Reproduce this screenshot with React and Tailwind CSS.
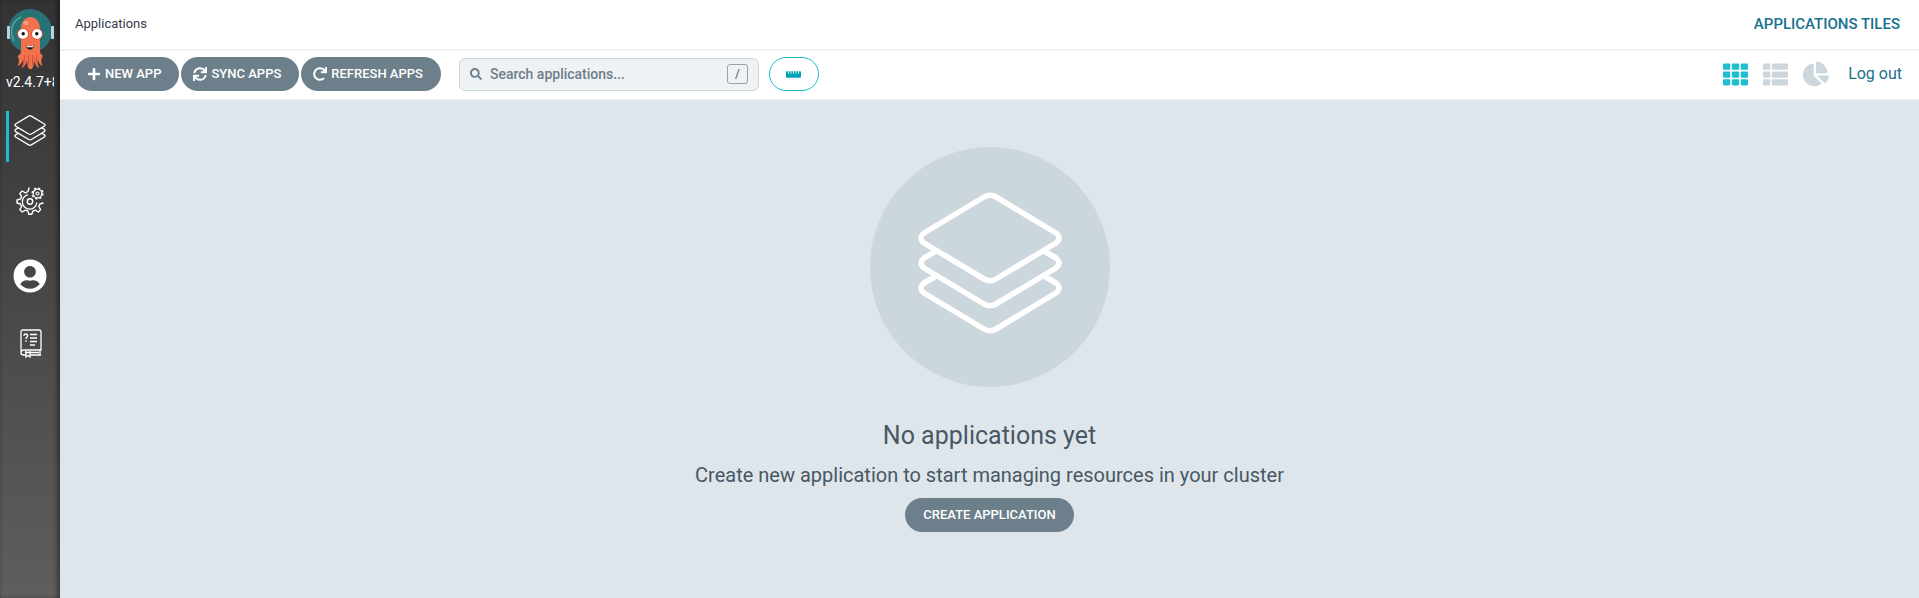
import { FaPlus, FaSync, FaRedo, FaSearch, FaRulerHorizontal, FaTh, FaThList, FaChartPie, FaUserCircle } from 'react-icons/fa';

function Octopus() {
  return (
    <svg viewBox="0 0 48 62" className="h-[62px] w-[48px]" aria-hidden="true">
      <circle cx="24" cy="23" r="21.5" fill="#257373" stroke="#356a86" strokeWidth="1" />
      <path d="M8 33C3 24 6 13 15 9" fill="none" stroke="#6fa5a5" strokeWidth="1.2" strokeLinecap="round" />
      <rect x="1" y="18" width="3" height="13" rx="0.8" fill="#b4cfe6" />
      <rect x="45" y="18" width="3" height="13" rx="0.8" fill="#b4cfe6" />
      <path d="M15 21C15 5 34 5 34 21C36 24 35 29 34 31V43C34 46 36 47 37 48C35 50 35 54 36.500 58C33.500 57 32 53 31.500 51C31.500 54 32 57 33 60C30 59 28.500 55 28 52C28 56 27.500 59 26 61H23C21.500 59 21 56 21 52C20.500 55 19 59 15.500 60C17 57 17.500 54 17.500 51C17 53 15 57 11.500 58C13.500 54 13.500 51 11.500 48C13 47 15 46 15 43V31C14 29 13 24 15 21Z" fill="#f0714c" />
      <path d="M18.500 47C18.500 52 18 55 17 58M22.500 47V57M26.500 47V57M30.500 47C30.500 52 31 55 32 58" fill="none" stroke="#c24e34" strokeWidth="0.8" />
      <ellipse cx="20" cy="15" rx="2.6" ry="2.2" fill="#f79d82" />
      <circle cx="17" cy="26" r="5.800" fill="#e04e35" />
      <circle cx="31" cy="26" r="5.800" fill="#e04e35" />
      <circle cx="17" cy="26" r="5" fill="#fff" />
      <circle cx="31" cy="26" r="5" fill="#fff" />
      <circle cx="17.200" cy="25.700" r="1.700" fill="#111" />
      <circle cx="30.800" cy="25.700" r="1.700" fill="#111" />
      <path d="M20 37.500C22 38.500 26 38.500 28 37.500C27.500 43 20.500 43 20 37.500Z" fill="#1c1414" />
      <path d="M20.500 37.500C22 38.500 26 38.500 27.500 37.500L27 39.200H21Z" fill="#fff" />
    </svg>
  );
}

function Layers({ className, strokeWidth }) {
  return (
    <svg viewBox="0 0 146 142" className={className} fill="none" stroke="currentColor" strokeWidth={strokeWidth} strokeLinejoin="round" aria-hidden="true">
      <path d="M67 5Q73 1.500 79 5L139 41Q145 46 139 51L79 87Q73 90.500 67 87L7 51Q1 46 7 41Z" />
      <path d="M20 58.500L7 66Q1 71 7 76L67 112Q73 115.500 79 112L139 76Q145 71 139 66L126 58.500" />
      <path d="M20 83.500L7 91Q1 96 7 101L67 137Q73 140.500 79 137L139 101Q145 96 139 91L126 83.500" />
    </svg>
  );
}

function Gears() {
  return (
    <svg viewBox="0 0 28 28" className="size-7" fill="none" stroke="#fff" strokeLinejoin="round" strokeLinecap="round" aria-hidden="true">
      <path strokeWidth="1.4" d="M13 1L12 4.500L9.500 5.800L6.200 4L3.800 6.400L5.600 9.600L4.500 12L1 13V16L4.500 17L5.600 19.500L3.800 22.600L6.200 25L9.400 23.200L12 24.200L12.800 27.300H15.800L16.800 24.200L19.300 23.200L22.400 25L24.600 22.600L22.800 19.500L23.800 17L27 16" />
      <path strokeWidth="1.3" d="M11.500 7.800A7.300 7.300 0 1 0 20.800 16" />
      <circle cx="14" cy="14.500" r="2.700" strokeWidth="1.500" />
      <circle cx="21.500" cy="6.500" r="4.300" strokeWidth="1.200" />
      <circle cx="21.500" cy="6.500" r="5.400" strokeWidth="1.500" strokeDasharray="2.120 2.120" strokeLinecap="butt" />
      <circle cx="21.500" cy="6.500" r="1.500" strokeWidth="1.200" />
    </svg>
  );
}

function Manual() {
  return (
    <svg viewBox="0 0 22 29" className="h-[29px] w-[22px]" fill="none" stroke="#fff" strokeWidth="1.3" aria-hidden="true">
      <path d="M1 24V3Q1 1 3 1H19Q21 1 21 3V21H4Q1 21 1 24Q1 26 4 26H6M10 26H21M20 21V26M5 23.5H19" />
      <path d="M6 22V28L8 26.5L10 28V22" />
      <path d="M4 7Q4 5 5.7 5Q7.6 5 7.6 6.8Q7.6 8 6 9V10M6 11.2V12.8" />
      <path d="M10 5.5H17M10 9H17M10 12.5H17M10 16H15" />
    </svg>
  );
}

const pill = 'flex h-[34px] items-center rounded-full bg-[#6d7f8b] text-[13px] font-medium text-white uppercase';

function ActionButton({ icon: Icon, children }) {
  return (
    <button type="button" className={`${pill} gap-1 pr-[18px] pl-3`}>
      <Icon className="size-[14px]" aria-hidden="true" />
      {children}
    </button>
  );
}

export default function App() {
  return (
    <div className="flex min-h-screen bg-[#dee6eb] font-[Roboto,sans-serif] text-[#495763]">
      <nav className="flex w-[60px] shrink-0 flex-col items-center bg-linear-to-b from-[#333] to-[#5e5e5e] pt-2 shadow-[inset_-4px_0_4px_-1px_rgba(0,0,0,0.4),inset_2px_0_3px_-2px_rgba(0,0,0,0.3)]">
        <a href="#home" aria-label="Home"><Octopus /></a>
        <div className="mt-[2px] w-[48px] overflow-hidden text-[14px] leading-5 whitespace-nowrap text-white">v2.4.7+8</div>
        <a href="#applications" aria-label="Applications" className="mt-[19px] flex h-[51px] w-full pl-[6px] text-white">
          <span className="w-[3px] bg-[#1fbdd0]" />
          <Layers className="mt-1 ml-[5px] h-[31px] w-8" strokeWidth={6} />
        </a>
        <a href="#settings" aria-label="Settings" className="mt-[25px]"><Gears /></a>
        <a href="#user" aria-label="User info" className="mt-11 text-white"><FaUserCircle className="size-[34px]" /></a>
        <a href="#help" aria-label="Documentation" className="mt-9 ml-[2px]"><Manual /></a>
      </nav>

      <div className="flex min-w-0 grow flex-col">
        <header className="flex h-[51px] items-center justify-between border-b-2 border-[#eef2f5] bg-white pr-[19px] pb-[1px] pl-[15px]">
          <a href="#applications" className="text-[13px] text-[#363c4a]">Applications</a>
          <h1 className="text-[15px] font-medium text-[#17718c] uppercase">Applications tiles</h1>
        </header>

        <div className="flex h-[49px] items-center border-b border-[#eef2f5] bg-white pr-[17px] pb-[2px] pl-[15px]">
          <div className="flex gap-[2px]">
            <ActionButton icon={FaPlus}>New App</ActionButton>
            <ActionButton icon={FaSync}>Sync Apps</ActionButton>
            <ActionButton icon={FaRedo}>Refresh Apps</ActionButton>
          </div>
          <label className="ml-[18px] flex h-[33px] w-[300px] items-center rounded-[6px] border border-[#ccd6dd] bg-[#eef2f5] px-[10px]">
            <FaSearch className="size-3 shrink-0 text-[#6d7f8b]" aria-hidden="true" />
            <input
              type="text"
              aria-label="Search applications"
              placeholder="Search applications..."
              className="ml-2 min-w-0 grow bg-transparent text-[14px] font-medium outline-none placeholder:text-[#6d7f8b]"
            />
            <kbd className="flex h-5 w-[21px] items-center justify-center rounded-[3px] border border-[#8fa4b1] font-[Roboto,sans-serif] text-[12px]">/</kbd>
          </label>
          <button type="button" aria-label="Toggle status bar" className="ml-[10px] flex h-[34px] w-[50px] items-center justify-center rounded-full border border-[#1fbdd0] text-[#00a2b3]">
            <FaRulerHorizontal className="size-[15px]" />
          </button>
          <div className="ml-auto flex items-center">
            <button type="button" aria-label="Tiles" className="mr-[15px] text-[#1fbdd0]"><FaTh className="size-[25px]" /></button>
            <button type="button" aria-label="List" className="mr-[15px] text-[#ccd6dd]"><FaThList className="size-[25px]" /></button>
            <button type="button" aria-label="Summary" className="mr-[19px] text-[#ccd6dd]"><FaChartPie className="size-[26px]" /></button>
            <a href="#logout" className="text-[16px] text-[#17718c]">Log out</a>
          </div>
        </div>

        <main className="flex flex-col items-center pt-[47px] pb-8">
          <div className="flex size-[240px] justify-center rounded-full bg-[#ccd6dd] pt-[45px] text-white">
            <Layers className="h-[142px] w-[146px]" strokeWidth={5.5} />
          </div>
          <h2 className="mt-[33px] text-[25px] leading-8">No applications yet</h2>
          <p className="mt-[7px] text-[20px] leading-8">Create new application to start managing resources in your cluster</p>
          <button type="button" className={`${pill} mt-[7px] px-[18px]`}>Create application</button>
        </main>
      </div>
    </div>
  );
}
